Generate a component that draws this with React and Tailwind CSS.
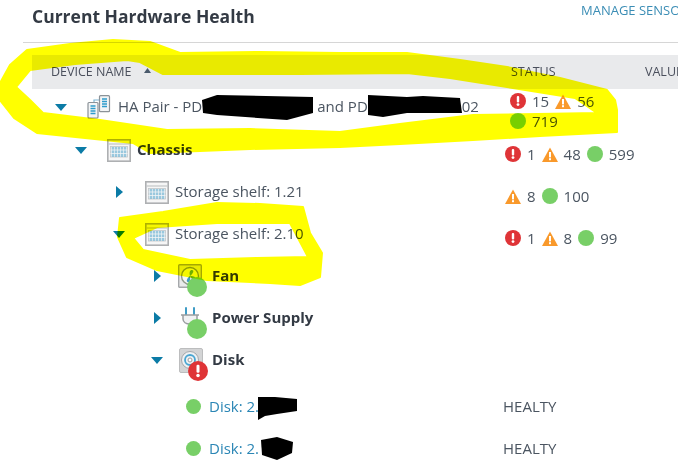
import React from 'react';

const Caret = ({ dir }) =>
  dir === 'down' ? (
    <svg width="12" height="7" viewBox="0 0 12 7"><path d="M0 0h12L6 7z" fill="#0b7ba6" /></svg>
  ) : (
    <svg width="7" height="12" viewBox="0 0 7 12"><path d="M0 0l7 6-7 6z" fill="#0b7ba6" /></svg>
  );

const ErrorIcon = ({ size = 16 }) => (
  <svg width={size} height={size} viewBox="0 0 16 16" className="shrink-0">
    <circle cx="8" cy="8" r="8" fill="#df3437" />
    <rect x="6.800" y="3" width="2.400" height="6.400" rx="1" fill="#fff" />
    <circle cx="8" cy="11.600" r="1.400" fill="#fff" />
  </svg>
);

const WarnIcon = () => (
  <svg width="16" height="15" viewBox="0 0 16 15" className="shrink-0">
    <path d="M8 .5L16 15H0z" fill="#f9992b" />
    <rect x="7" y="5" width="2" height="5.400" fill="#fff" />
    <rect x="7" y="11.200" width="2" height="2" fill="#fff" />
  </svg>
);

const Dot = ({ color = 'bg-[#78cf67]', size = 'w-4 h-4' }) => (
  <span className={`${color} ${size} rounded-full shrink-0`} />
);

const PairIcon = () => (
  <svg width="24" height="24" viewBox="0 0 24 24">
    <path d="M7 11V5h5" fill="none" stroke="#7fb6d3" strokeWidth="1.200" />
    <rect x="12.500" y="0.700" width="10" height="16" rx="1" fill="#f3f5f6" stroke="#8b9298" strokeWidth="1.200" />
    <path d="M15 4h5M15 6.500h5M15 9h5M15 11.500h5" stroke="#2f9ccc" strokeWidth="1.500" />
    <rect x="1" y="7.500" width="10" height="15.500" rx="1" fill="#f3f5f6" stroke="#8b9298" strokeWidth="1.200" />
    <path d="M3.500 11h5M3.500 13.500h5M3.500 16h5M3.500 18.500h5" stroke="#2f9ccc" strokeWidth="1.500" />
  </svg>
);

const ShelfIcon = () => (
  <svg width="24" height="23" viewBox="0 0 24 23">
    <rect x="0.800" y="0.800" width="22.400" height="21.400" fill="#f6f6f6" stroke="#aeb0b2" strokeWidth="1.600" />
    <path d="M1 5h22" stroke="#c4c6c8" strokeWidth="1.200" />
    <rect x="3.500" y="7.500" width="17" height="10.500" fill="#d5e6ee" stroke="#c2c6c9" strokeWidth="0.800" />
    <path d="M6 8v10M9 8v10M12 8v10M15 8v10M18 8v10" stroke="#73b5d4" strokeWidth="1.200" />
    <path d="M3.500 11h17M3.500 14.500h17" stroke="#f4f5f6" strokeWidth="0.800" />
  </svg>
);

const FanIcon = () => (
  <svg width="24" height="24" viewBox="0 0 24 24">
    <rect x="0.700" y="0.700" width="22.600" height="22.600" rx="1" fill="#e9eaeb" stroke="#a5a8ab" strokeWidth="1.400" />
    <circle cx="12" cy="12" r="8.500" fill="#f5f7f2" stroke="#8f9a8c" strokeWidth="1.400" />
    <path d="M12 12c-1-4 0-6 2-6s2 3-2 6zM12 12c4 0 6 1 5.500 3s-3.500 1.500-5.500-3z" fill="#6fb04f" />
    <path d="M12 12c-3 2-4 5-2.500 6s3.500-2 2.500-6z" fill="#3f9cc6" />
  </svg>
);

const PlugIcon = () => (
  <svg width="20" height="22" viewBox="0 0 20 22">
    <path d="M6 1v7M14 1v7" stroke="#3f9cc6" strokeWidth="2" strokeLinecap="round" />
    <path d="M1 8h18M3 8v4c0 3 3 5 7 5s7-2 7-5V8" fill="#f1f2f3" stroke="#9a9da0" strokeWidth="1.500" />
    <path d="M10 17v4" stroke="#9a9da0" strokeWidth="2" />
  </svg>
);

const DiskIcon = () => (
  <svg width="24" height="25" viewBox="0 0 24 25">
    <rect x="0.500" y="0.500" width="23" height="24" rx="1.500" fill="#d3d4d5" stroke="#bcbdbe" />
    <circle cx="11" cy="12" r="8.500" fill="#eef1f3" stroke="#a5a8ab" />
    <circle cx="11" cy="12" r="5" fill="none" stroke="#4aa6d2" strokeWidth="1.800" />
    <circle cx="11" cy="12" r="2" fill="#fff" stroke="#9a9da0" />
  </svg>
);

const Counts = ({ items }) => (
  <>
    {items.map(([kind, n]) => (
      <span key={kind} className="flex items-center gap-[6px] mr-[6px]">
        {kind === 'error' && <ErrorIcon />}
        {kind === 'warn' && <WarnIcon />}
        {kind === 'ok' && <Dot />}
        <span>{n}</span>
      </span>
    ))}
  </>
);

const Row = ({ pad, box, caret, icon, badge, bold, gap = 'mr-[6px]', children, status, className = 'h-[42px]' }) => (
  <div className={`flex items-center ${className}`}>
    <div className={`w-[505px] shrink-0 flex items-center ${pad}`}>
      <div className={`${box} flex items-center shrink-0`}>
        <Caret dir={caret} />
      </div>
      <div className={`relative w-[24px] h-[25px] ${gap} flex items-center justify-center shrink-0`}>
        {icon}
        {badge && (
          <span className="absolute left-[9px] top-[13px]">{badge}</span>
        )}
      </div>
      <span className={bold ? 'mb-[2px] font-bold text-[#333a44]' : 'mb-[3px]'}>{children}</span>
    </div>
    {status && <div className="flex items-center pt-2 h-[28px]">{status}</div>}
  </div>
);

const DiskRow = ({ children, className }) => (
  <div className={`flex items-center h-[42px] ${className}`}>
    <div className="w-[503px] shrink-0 flex items-center gap-[8px] pl-[186px] text-[#2b86b5]">
      <Dot size="w-[15px] h-[15px]" />
      <span>{children}</span>
    </div>
    <span>HEALTY</span>
  </div>
);

export default function App() {
  return (
    <div className="relative w-[678px] h-[474px] overflow-hidden bg-white font-['Open_Sans',sans-serif] text-[15px] leading-5 text-[#4b5561]">
      <div className="relative ml-[23px] h-[43px] border-b border-[#d6d6d6] pl-[9px] flex justify-between">
        <h1 className="pt-[6px] text-[17.500px] font-bold text-[#333a44]">Current Hardware Health</h1>
        <a className="absolute left-[558px] top-0 whitespace-nowrap text-[13px] text-[#3b8db5]">MANAGE SENSORS</a>
      </div>

      <div className="mt-[12px] ml-[32px] h-[34px] bg-[#e9eaec] flex items-center text-[12.500px] text-[#4a4f5c]">
        <div className="w-[479px] pl-[19px] flex items-center gap-[12px] shrink-0">
          <span>DEVICE NAME</span>
          <svg width="7" height="5" viewBox="0 0 7 5" className="mb-[3px]"><path d="M0 5L3.500 0 7 5z" fill="#4a5a6c" /></svg>
        </div>
        <span className="w-[134px] shrink-0">STATUS</span>
        <span>VALUE</span>
      </div>

      <Row
        pad="pl-[55px]"
        box="w-[32px]"
        caret="down"
        icon={<PairIcon />}
        gap="mr-[7px]"
        className="h-[40px] pb-1"
        status={
          <div className="flex flex-wrap w-[110px] ml-[5px]">
            <Counts items={[['error', 15], ['warn', 56]]} />
            <Counts items={[['ok', 719]]} />
          </div>
        }
      >
        HA Pair - PD<span className="inline-block w-[115px]" />and PD<span className="inline-block w-[94px]" />02
      </Row>
      <Row pad="pl-[75px]" box="w-[32px]" caret="down" icon={<ShelfIcon />} bold status={<Counts items={[['error', 1], ['warn', 48], ['ok', 599]]} />}>
        Chassis
      </Row>
      <Row pad="pl-[116px]" box="w-[29px]" caret="right" icon={<ShelfIcon />} status={<Counts items={[['warn', 8], ['ok', 100]]} />}>
        Storage shelf: 1.21
      </Row>
      <Row pad="pl-[113px]" box="w-[32px]" caret="down" icon={<ShelfIcon />} status={<Counts items={[['error', 1], ['warn', 8], ['ok', 99]]} />}>
        Storage shelf: 2.10
      </Row>
      <Row pad="pl-[154px]" box="w-[24px]" caret="right" icon={<FanIcon />} gap="mr-[10px]" badge={<Dot size="w-5 h-5 block" />} bold>
        Fan
      </Row>
      <Row pad="pl-[154px]" box="w-[24px]" caret="right" icon={<PlugIcon />} gap="mr-[10px]" badge={<Dot size="w-5 h-5 block" />} bold>
        Power Supply
      </Row>
      <Row pad="pl-[151px]" box="w-[28px]" caret="down" icon={<DiskIcon />} gap="mr-[9px]" badge={<ErrorIcon size={20} />} bold>
        Disk
      </Row>
      <DiskRow className="mt-1">Disk: 2.</DiskRow>
      <DiskRow>Disk: 2.</DiskRow>

      {/* marker scribbles drawn over the screenshot */}
      <svg className="absolute inset-0 mix-blend-multiply pointer-events-none" width="678" height="474" viewBox="0 0 678 474">
        <path
          fill="#ffff00"
          stroke="#ffff00"
          strokeWidth="2"
          strokeLinejoin="round"
          d="M27 50L70 44L113 40L150 42L180 53L260 52L340 53L407 53L460 60L507 67L560 78L607 90L615 100L617 110L617 132L540 136L473 140L400 144L340 147L250 149L150 153L133 143L85 138L37 133L14 118L0 100L0 83L10 65ZM30 70L16 87L30 100L43 113L100 120L167 130L250 129L340 132L400 124L473 115L597 113L575 98L507 87L450 78L407 73L300 74L163 74L140 62L127 60L75 64Z"
        />
        <path
          fill="#ffff00"
          stroke="#ffff00"
          strokeWidth="2"
          strokeLinejoin="round"
          d="M120 218L163 212L217 203L260 204L303 207L310 233L322 253L320 277L300 285L270 283L207 280L157 270L127 257L118 237ZM133 238L143 250L190 260L257 258L308 257L290 223L217 223L157 227Z"
        />
      </svg>
      <svg className="absolute inset-0 pointer-events-none" width="678" height="474" viewBox="0 0 678 474">
        <path fill="#000" d="M202 100L217 95L313 97L313 113L287 120L217 115L203 113Z" />
        <path fill="#000" d="M368 95L407 97L423 96L460 98L462 113L407 113L383 117L368 115Z" />
        <path fill="#000" d="M258 397L275 397L297 399L297 411L277 414L265 416L258 420Z" />
        <path fill="#000" d="M261 440L277 437L293 442L292 453L277 460L262 455Z" />
      </svg>
    </div>
  );
}
